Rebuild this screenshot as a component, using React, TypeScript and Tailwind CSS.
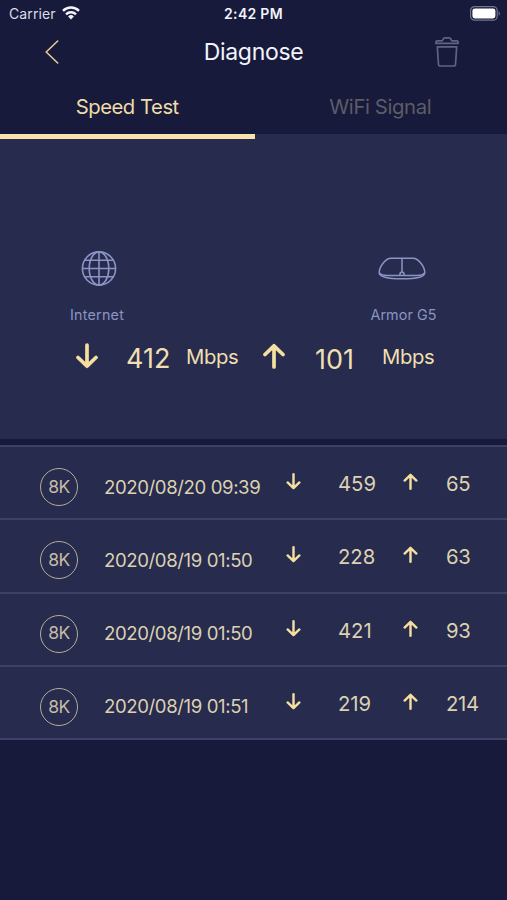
import React from "react";

interface SpeedRecord {
  date: string;
  down: number;
  up: number;
}

const records: SpeedRecord[] = [
  { date: "2020/08/20 09:39", down: 459, up: 65 },
  { date: "2020/08/19 01:50", down: 228, up: 63 },
  { date: "2020/08/19 01:50", down: 421, up: 93 },
  { date: "2020/08/19 01:51", down: 219, up: 214 },
];

const Arrow = ({ up = false, className = "" }: { up?: boolean; className?: string }) => (
  <svg
    viewBox="0 0 22 26"
    fill="none"
    stroke="currentColor"
    strokeWidth="3.7"
    strokeLinecap="round"
    strokeLinejoin="round"
    className={`shrink-0 text-[#f5dfa0] ${up ? "rotate-180" : ""} ${className}`}
  >
    <path d="M11 2v21M2 14.5l9 8.7 9-8.7" />
  </svg>
);

const StatusBar = () => (
  <div className="flex h-7 items-center px-[9px] text-[#f3f3fb]">
    <div className="flex flex-1 items-center gap-[6px]">
      <span className="text-[14px] leading-7 tracking-[0.12px] text-[#dcdde9]">Carrier</span>
      <svg viewBox="0 0 18 14" className="-mt-0.5 h-[14px] w-[18px]" fill="none" stroke="currentColor">
        <path d="M1 4.9a11.4 11.4 0 0 1 16 0" strokeWidth="2.5" />
        <path d="M4 8.3a7.1 7.1 0 0 1 10 0" strokeWidth="2.4" />
        <path d="M9 13.6 6.1 10.5a4.2 4.2 0 0 1 5.8 0z" fill="currentColor" stroke="none" />
      </svg>
    </div>
    <span className="text-[14px] font-semibold leading-7 tracking-[0.3px]">2:42 PM</span>
    <div className="flex flex-1 justify-end">
      <svg viewBox="0 0 31 15" className="mt-[-2px] mr-[-3px] h-[15px] w-[31px]" fill="none">
        <rect x="0.6" y="0.6" width="26.6" height="13.6" rx="4" stroke="#74758f" strokeWidth="1.2" />
        <rect x="2.4" y="2.4" width="23" height="10" rx="2.4" fill="#fff" />
        <path d="M28.6 5.200c1.800.8 1.800 3.700 0 4.500z" fill="#74758f" />
      </svg>
    </div>
  </div>
);

const Header = () => (
  <div className="flex h-[48px] items-center pl-[45px] pr-[48px]">
    <svg viewBox="0 0 14 24" className="h-6 w-[14px]" fill="none" stroke="#e3ce92" strokeWidth="1.6" strokeLinecap="round" strokeLinejoin="round">
      <path d="M12.7 1 1.2 12l11.5 11" />
    </svg>
    <h1 className="flex-1 pl-[13px] text-center text-[23px] leading-[48px] tracking-[-0.3px] text-[#f3f3fb]">Diagnose</h1>
    <svg viewBox="0 0 24 30" className="h-[30px] w-6" fill="none" stroke="#626382" strokeWidth="1.7" strokeLinejoin="round">
      <path d="M.9 6.4V5.1q0-1.2 1.3-1.2h4.1c1 0 1.2-.5 1.7-1.5Q8.6.9 9.8.9h4.4q1.2 0 1.8 1.5c.5 1 .7 1.5 1.7 1.5h4.1q1.3 0 1.3 1.2v1.3z" />
      <path d="m2.3 9.8 1.2 17.4q.1 1.8 1.9 1.8h13.2q1.8 0 1.9-1.8l1.2-17.4z" />
    </svg>
  </div>
);

export default function App() {
  return (
    <div className="h-[900px] w-[507px] overflow-hidden bg-[#171a3a] font-['Inter',sans-serif]">
      <StatusBar />
      <Header />

      <div className="grid h-[58px] grid-cols-2 text-center text-[20.3px] leading-[62px]">
        <div className="pl-[1px] tracking-[-0.48px] text-[#efdca8]">Speed Test</div>
        <div className="tracking-[-0.38px] text-[#5c5d66]">WiFi Signal</div>
      </div>

      <div className="h-[305px] bg-[#272b4e]">
        <div className="h-[5px] w-[255px] bg-[#f8e3a8]" />
        <div className="flex justify-between pl-[70px] pr-[70px] pt-[111px] text-[#8a94c5]">
          <div className="flex w-[54px] flex-col items-center">
            <svg viewBox="0 0 36 36" className="ml-[4px] h-9 w-9" fill="none" stroke="currentColor" strokeWidth="1.6">
              <circle cx="18" cy="18.5" r="16.6" />
              <ellipse cx="18" cy="18.5" rx="9.8" ry="16.6" />
              <path d="M18 1.900v33.200M1.400 18.500h33.200M4 10.200h28M4 26.800h28" />
            </svg>
            <span className="mt-[18px] text-[14.3px] leading-[22px] tracking-[0.25px]">Internet</span>
          </div>
          <div className="flex w-[67px] flex-col items-center">
            <svg viewBox="0 0 50 36" className="-ml-[3px] h-9 w-[50px]" fill="none" stroke="currentColor" strokeWidth="1.5">
              <path d="M14 8.200h22c5.500 0 11.800 8.800 11.800 14.500 0 4-8 6.100-22.800 6.100S2.200 26.700 2.200 22.700C2.200 17 8.500 8.200 14 8.200z" />
              <path d="M2.500 22.900C4 24.700 6 25.400 10 25.400h30c4 0 6-.7 7.500-2.500" />
              <path d="M25 8.200v13.500M22.800 25.400c0-4.500 4.400-4.500 4.400 0" />
            </svg>
            <span className="mt-[18px] whitespace-nowrap text-[14.3px] leading-[22px] tracking-[0.1px]">Armor G5</span>
          </div>
        </div>

        <div className="mt-3 flex h-[44px] items-start text-[#f0dfb0]">
          <Arrow className="ml-[76px] mt-[5px] h-[26px] w-[22px]" />
          <span className="ml-[28px] mt-[5px] w-[60px] text-[27px] leading-8">412</span>
          <span className="mt-[3px] w-[77px] text-[20.3px] leading-8 tracking-[-0.35px]">Mbps</span>
          <Arrow up className="mt-[5px] h-[26px] w-[22px]" />
          <span className="ml-[30px] mt-[6px] w-[67px] text-[27px] leading-8">101</span>
          <span className="mt-[3px] text-[20.3px] leading-8 tracking-[-0.35px]">Mbps</span>
        </div>
      </div>

      <div className="mt-[6px] border-t-2 border-[#3d4167] bg-[#272b4e] text-[#dcd1b1]">
        {records.map((record, i) => (
          <div key={i} className="flex h-[73.3px] items-start border-b-2 border-[#3d4167] pl-[40px]">
            <div className="mt-[21px] flex h-[38px] w-[38px] items-center justify-center rounded-full border-[1.5px] border-[#b3ad9a] text-[17.5px] tracking-[-0.5px] text-[#c5bda6]">
              8K
            </div>
            <span className="ml-[26px] mt-[23.6px] w-[182px] whitespace-nowrap text-[18.6px] leading-8 tracking-[-0.4px]">{record.date}</span>
            <Arrow className="mt-[26px] h-[17px] w-[15px]" />
            <span className="ml-[37px] mt-[21px] w-[65px] text-[20.3px] leading-8">{record.down}</span>
            <Arrow up className="mt-[26px] h-[17px] w-[15px]" />
            <span className="ml-[28px] mt-[21px] text-[20.3px] leading-8 tracking-[-0.3px]">{record.up}</span>
          </div>
        ))}
      </div>
    </div>
  );
}
